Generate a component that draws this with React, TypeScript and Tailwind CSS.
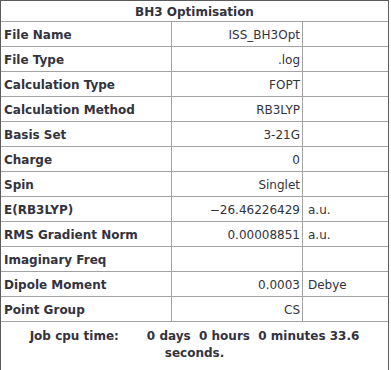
import React from 'react';

const rows: [string, string, string][] = [
  ['File Name', 'ISS_BH3Opt', ''],
  ['File Type', '.log', ''],
  ['Calculation Type', 'FOPT', ''],
  ['Calculation Method', 'RB3LYP', ''],
  ['Basis Set', '3-21G', ''],
  ['Charge', '0', ''],
  ['Spin', 'Singlet', ''],
  ['E(RB3LYP)', '\u221226.46226429', 'a.u.'],
  ['RMS Gradient Norm', '0.00008851', 'a.u.'],
  ['Imaginary Freq', '', ''],
  ['Dipole Moment', '0.0003', 'Debye'],
  ['Point Group', 'CS', ''],
];

const App = () => {
  return (
    <div className="min-h-screen bg-white">
      <div
        className="w-[389px] border border-[#5c5c5c] text-[12px] text-[#33333d]"
        style={{ fontFamily: '"DejaVu Sans", Verdana, sans-serif' }}
      >
        <div className="grid grid-cols-[170px_130px_85px] gap-px bg-[#a3a3a3]">
          <div className="col-span-3 h-[20px] bg-white flex items-center justify-center pt-px font-bold">
            BH3 Optimisation
          </div>
          {rows.map(([label, value, unit]) => (
            <React.Fragment key={label}>
              <div className="h-[24px] bg-white flex items-center pt-[2px] pl-[3px] font-bold">{label}</div>
              <div className="h-[24px] bg-white flex items-center justify-end pt-[2px] pr-[2px]">{value}</div>
              <div className="h-[24px] bg-white flex items-center pt-[2px] pl-[5px]">{unit}</div>
            </React.Fragment>
          ))}
          <div className="col-span-3 bg-white pt-[6px] pb-[12px] text-center font-bold leading-[17px]">
            <div>
              <span>Job cpu time:</span>
              <span className="ml-[28px] whitespace-pre">0 days  0 hours  0 minutes 33.6</span>
            </div>
            <div>seconds.</div>
          </div>
        </div>
      </div>
    </div>
  );
};

export default App;
